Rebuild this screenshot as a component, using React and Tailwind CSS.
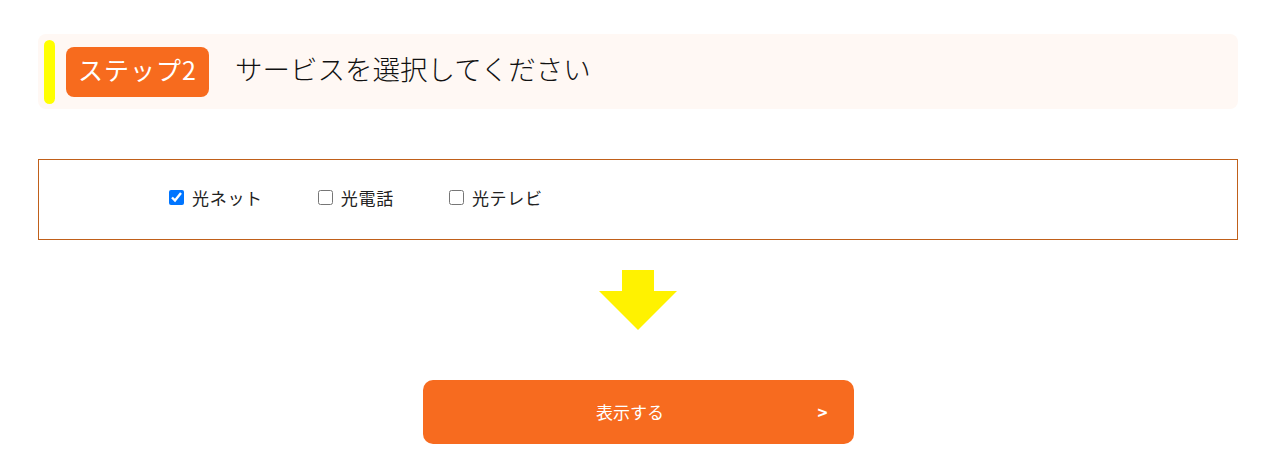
import React, { useState } from "react";

const services = ["光ネット", "光電話", "光テレビ"];

const App = () => {
  const [checked, setChecked] = useState({ 光ネット: true });

  const toggle = (name) => {
    setChecked((prev) => ({ ...prev, [name]: !prev[name] }));
  };

  return (
    <div
      className="w-full bg-white px-[38px] pt-[34px] pb-[28px]"
      style={{ fontFamily: '"Noto Sans CJK JP", "Noto Sans", sans-serif' }}
    >
      {/* Step heading */}
      <div className="flex h-[75px] items-center rounded-lg bg-[#fff8f4] pl-[6px]">
        <div className="h-[64px] w-[11px] rounded-full bg-[#ffff00]" />
        <div className="ml-[11px] flex h-[50px] w-[143px] items-center justify-center rounded-lg bg-[#f76b1e] pb-[4px] text-[25px] tracking-[1px] text-white">
          ステップ2
        </div>
        <h2 className="mb-[6px] ml-[26px] text-[27.5px] font-light text-[#111]">
          サービスを選択してください
        </h2>
      </div>

      {/* Service checkboxes */}
      <div className="mt-[50px] flex h-[81px] items-center border border-[#c0601a] pb-[4px] pl-[130px]">
        {services.map((name) => (
          <label
            key={name}
            className="mr-[55px] flex cursor-pointer items-center text-[17px] tracking-[0.7px] text-[#222]"
          >
            <input
              type="checkbox"
              checked={!!checked[name]}
              onChange={() => toggle(name)}
              className="mr-[8px] h-[15px] w-[15px]"
            />
            {name}
          </label>
        ))}
      </div>

      {/* Arrow */}
      <div className="mt-[30px] flex justify-center">
        <svg width="78" height="60" viewBox="0 0 78 60">
          <path d="M23 0 H55 V21 H78 L39 60 L0 21 H23 Z" fill="#fff200" />
        </svg>
      </div>

      {/* Submit */}
      <div className="mt-[50px] flex justify-center">
        <button className="flex h-[64px] w-[431px] items-center rounded-[10px] bg-[#f76b1f] pl-[20px] pr-[26px] text-[17px] text-white">
          <span className="flex-1 text-center">表示する</span>
          <span className="font-bold">&gt;</span>
        </button>
      </div>
    </div>
  );
};

export default App;
